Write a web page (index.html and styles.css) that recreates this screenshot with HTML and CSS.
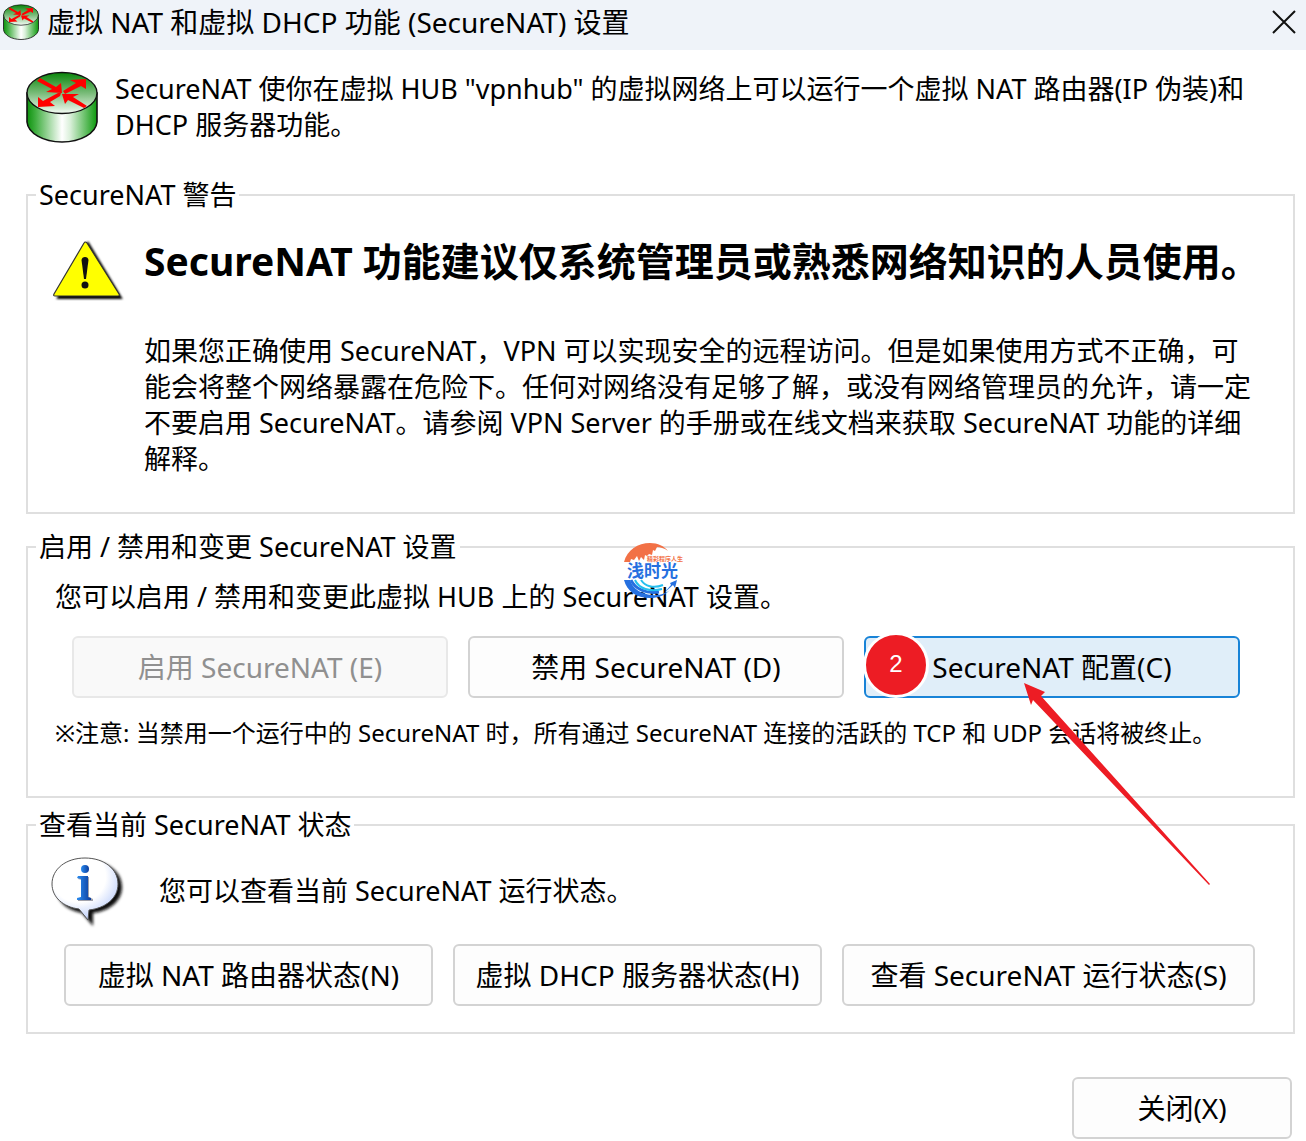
FILE: index.html
```html
<!DOCTYPE html>
<html lang="zh-CN">
<head>
<meta charset="utf-8">
<meta name="viewport" content="width=device-width, initial-scale=1">
<title>虚拟 NAT 和虚拟 DHCP 功能 (SecureNAT) 设置</title>
<link rel="stylesheet" href="styles.css">
</head>
<body>
<svg class="defs" width="0" height="0" aria-hidden="true">
  <defs>
    <linearGradient id="side"><stop offset="0" stop-color="#0d920d"/><stop offset=".12" stop-color="#3fae3f"/><stop offset=".5" stop-color="#fff"/><stop offset=".62" stop-color="#d8efd8"/><stop offset="1" stop-color="#0c9a0c"/></linearGradient>
    <linearGradient id="lid" x1="0" y1="0" x2="0" y2="1"><stop offset="0" stop-color="#0a860a"/><stop offset=".5" stop-color="#78bb78"/><stop offset="1" stop-color="#f4fbf4"/></linearGradient>
    <symbol id="router" viewBox="0 0 72 72">
      <path d="M1 22V51C2 62 17 71 36 71S70 62 71 51V22Z" fill="url(#side)" stroke="#111" stroke-width="1.6"/>
      <ellipse cx="36" cy="22" rx="35" ry="20.5" fill="url(#lid)" stroke="#111" stroke-width="1.4"/>
      <g fill="#f00">
        <path d="M14 7 30 16 35 12 36 22 20 21 26 18 11 10Z"/>
        <path d="M37 20 50 12 44 9 60 8 60 18 55 15 39 23Z"/>
        <path d="M35 22 34 25 24 31 29 35 12 36 12 26 17 30 32 22Z"/>
        <path d="M36 23 53 23 47 26 61 35 58 37 42 29 39 33Z"/>
      </g>
    </symbol>
  </defs>
</svg>
<div class="dialog">
  <header class="titlebar">
    <svg class="titlebar-icon" aria-hidden="true"><use href="#router"/></svg>
    <h1 class="title">虚拟 NAT 和虚拟 DHCP 功能 (SecureNAT) 设置</h1>
    <button class="close" type="button" aria-label="关闭窗口"><svg width="24" height="24" viewBox="0 0 24 24"><path d="M1 1 23 23M23 1 1 23" stroke="#111" stroke-width="2"/></svg></button>
  </header>
  <main class="content">
    <div class="intro">
      <svg class="router-icon" aria-hidden="true"><use href="#router"/></svg>
      <p class="text">SecureNAT 使你在虚拟 HUB "vpnhub" 的虚拟网络上可以运行一个虚拟 NAT 路由器(IP 伪装)和<br>DHCP 服务器功能。</p>
    </div>

    <fieldset class="group">
      <legend>SecureNAT 警告</legend>
      <div class="warning">
        <svg class="warning-icon" viewBox="0 0 72 62" aria-hidden="true">
          <defs><filter id="soft" x="-20%" y="-20%" width="140%" height="140%"><feGaussianBlur stdDeviation="1"/></filter></defs>
          <path d="M35 3 68 58H5Z" fill="#000" stroke="#000" stroke-width="2" filter="url(#soft)"/>
          <path d="M31 3Q32 1 34 3L66 54Q67 56 65 56H2Q0 56 1 54Z" fill="#ff0" stroke="#333" stroke-width="1.2"/>
          <path d="M28.500 20Q29 17 32 17T35.500 20L33 39H31Z" fill="#111"/><circle cx="32" cy="45" r="3.500" fill="#111"/>
        </svg>
        <div>
          <h2 class="headline">SecureNAT 功能建议仅系统管理员或熟悉网络知识的人员使用。</h2>
          <p class="text">如果您正确使用 SecureNAT，VPN 可以实现安全的远程访问。但是如果使用方式不正确，可<br>能会将整个网络暴露在危险下。任何对网络没有足够了解，或没有网络管理员的允许，请一定<br>不要启用 SecureNAT。请参阅 VPN Server 的手册或在线文档来获取 SecureNAT 功能的详细<br>解释。</p>
        </div>
      </div>
    </fieldset>

    <fieldset class="group">
      <legend>启用 / 禁用和变更 SecureNAT 设置</legend>
      <div class="control">
        <p class="text">您可以启用 / 禁用和变更此虚拟 HUB 上的 SecureNAT 设置。</p>
        <div class="control-buttons">
          <button class="btn" type="button" disabled>启用 SecureNAT (E)</button>
          <button class="btn" type="button">禁用 SecureNAT (D)</button>
          <div class="marked">
            <button class="btn active" type="button">SecureNAT 配置(C)</button>
            <span class="badge">2</span>
            <svg class="arrow" width="187" height="203" viewBox="0 0 187 203" aria-hidden="true"><path d="M0 0 21 9 17 13 186 201 185 202 9 17 7 22Z" fill="#ed1c24"/></svg>
          </div>
        </div>
        <p class="note">※注意: 当禁用一个运行中的 SecureNAT 时，所有通过 SecureNAT 连接的活跃的 TCP 和 UDP 会话将被终止。</p>
      </div>
      <svg class="stamp" width="60" height="56" viewBox="0 0 60 56">
        <path d="M0 19C3 7 14 0 26 0 34 0 40 3 44 8 40 5 36 4 33 4L31 8 29 7 28 12 25 11 23 13 21 12 20 17 17 14 15 18 13 13 10 17 7 16 6 19Z" fill="#f27146"/>
        <path d="M0 37H6C9 46 17 51 28 52 36 53 42 50 46 47 40 53 34 55 26 55 12 55 3 48 0 37Z" fill="#2670df"/>
        <path d="M7 37C11 46 22 51 35 49" fill="none" stroke="#2670df" stroke-width="3"/>
        <path d="M11 37C15 46 26 49 38 46M17 37C21 43 29 46 39 42" fill="none" stroke="#25bfee" stroke-width="2"/>
        <path d="M46 40 53 37 51 45 49 42 40 50 47 42Z" fill="#2670df"/>
        <text class="stamp-small" x="23" y="18">精彩程序人生</text>
        <text class="stamp-name" x="3" y="34">浅时光</text>
      </svg>
    </fieldset>

    <fieldset class="group">
      <legend>查看当前 SecureNAT 状态</legend>
      <div class="status">
        <div class="status-row">
          <svg class="info-icon" viewBox="0 0 74 72" aria-hidden="true">
            <defs>
              <radialGradient id="bubble" cx=".4" cy=".3" r=".75"><stop offset=".55" stop-color="#fff"/><stop offset="1" stop-color="#b4c8fa"/></radialGradient>
              <linearGradient id="blue"><stop offset="0" stop-color="#2a8cf0"/><stop offset="1" stop-color="#0c3c9c"/></linearGradient>
              <filter id="shade" x="-20%" y="-20%" width="140%" height="140%"><feGaussianBlur stdDeviation="1.500"/></filter>
            </defs>
            <path d="M38 4C57 4 71 15 71 30 71 44 59 54 42 56L42 69 31 56C15 53 5 43 5 30 5 15 19 4 38 4Z" fill="#111" filter="url(#shade)"/>
            <path d="M34 1C53 1 67 12 67 27 67 41 55 51 38 53L37 63 28 52C12 50 1 40 1 27 1 12 15 1 34 1Z" fill="url(#bubble)" stroke="#555" stroke-width="1"/>
            <path d="M28 20H38V40L42 42V44H27V42L31 40V23L27 22Z" fill="#445" opacity=".5"/>
            <path d="M27 19H37V40L40 41V43H26V41L30 40V22L26 21Z" fill="url(#blue)"/><circle cx="34" cy="12" r="4" fill="url(#blue)"/>
          </svg>
          <p class="text">您可以查看当前 SecureNAT 运行状态。</p>
        </div>
        <div class="status-buttons">
          <button class="btn" type="button">虚拟 NAT 路由器状态(N)</button>
          <button class="btn" type="button">虚拟 DHCP 服务器状态(H)</button>
          <button class="btn" type="button">查看 SecureNAT 运行状态(S)</button>
        </div>
      </div>
    </fieldset>
  </main>
  <footer class="footer"><button class="btn dismiss" type="button">关闭(X)</button></footer>
</div>
</body>
</html>
```
FILE: styles.css
```css
* { box-sizing: border-box; }

body {
  margin: 0;
  background: #fff;
  color: #000;
  font-family: "Noto Sans", "Noto Sans CJK SC", sans-serif;
  font-size: 27px;
  line-height: 36px;
}

h1, h2, p { margin: 0; }
button { font: inherit; color: inherit; }
.defs { position: absolute; }

.titlebar {
  display: flex;
  align-items: center;
  height: 50px;
  padding: 0 10px 6px 3px;
  background: #eff3f9;
}
.titlebar-icon { width: 36px; height: 36px; flex: none; }
.title {
  flex: 1;
  margin-left: 8px;
  font-size: 28px;
  font-weight: 400;
}
.close {
  display: flex;
  padding: 0;
  border: 0;
  background: none;
}

.content { padding: 21px 11px 0 26px; }
.intro {
  display: flex;
  gap: 17px;
  padding-bottom: 34px;
}
.router-icon { width: 72px; height: 72px; flex: none; }
.text { white-space: nowrap; }

.group {
  position: relative;
  min-width: 0;
  margin: 0 0 9px;
  padding: 0;
  border: 2px solid #dfdfdf;
}
.group legend {
  margin-left: 8px;
  padding: 0 3px;
}

.warning {
  display: flex;
  gap: 19px;
  padding: 24px 0 35px 25px;
}
.group:has(.warning) { margin-bottom: 15px; }
.warning-icon {
  width: 72px;
  height: 62px;
  flex: none;
  margin-top: 3px;
}
.headline {
  margin-bottom: 48px;
  font-size: 39px;
  line-height: 48px;
  white-space: nowrap;
}

.control { padding: 14px 53px 47px 27px; }
.control-buttons {
  display: grid;
  grid-template-columns: repeat(3, 1fr);
  gap: 20px;
  margin: 21px 0 19px 17px;
}
.btn {
  width: 100%;
  height: 62px;
  padding: 0;
  border: 2px solid #d3d3d3;
  border-radius: 6px;
  background: #fdfdfd;
  font-size: 28px;
  white-space: nowrap;
}
.btn:disabled {
  border-color: #e8e8e8;
  background: #f9f9f9;
  color: #909090;
}
.btn.active {
  border-color: #1883d7;
  background: #e0eef9;
}
.marked { position: relative; height: 62px; }
.badge {
  position: absolute;
  top: -4px;
  left: -1px;
  width: 66px;
  height: 66px;
  border: 3px solid #fff;
  border-radius: 50%;
  background: #ed1c24;
  color: #fff;
  font: 24px/58px "Liberation Sans", sans-serif;
  text-align: center;
}
.arrow {
  position: absolute;
  top: 47px;
  left: 160px;
  z-index: 1;
  pointer-events: none;
}
.note {
  font-size: 24px;
  line-height: 32px;
  white-space: nowrap;
}
.stamp {
  position: absolute;
  top: -22px;
  left: 596px;
}
.stamp-small { font: 700 6px "Noto Sans CJK SC", sans-serif; fill: #f27146; }
.stamp-name { font: 700 17px "Noto Sans CJK SC", sans-serif; fill: #2670df; }

.status { padding: 14px 38px 26px 23px; }
.status-row {
  display: flex;
  align-items: flex-start;
  gap: 34px;
  margin-bottom: 15px;
}
.status-row .text { padding-top: 16px; }
.info-icon { width: 74px; height: 72px; }
.status-buttons {
  display: grid;
  grid-template-columns: 369fr 369fr 413fr;
  gap: 20px;
  margin-left: 13px;
}

.footer {
  display: flex;
  justify-content: flex-end;
  padding: 34px 14px 2px;
}
.dismiss { width: 220px; }
```
